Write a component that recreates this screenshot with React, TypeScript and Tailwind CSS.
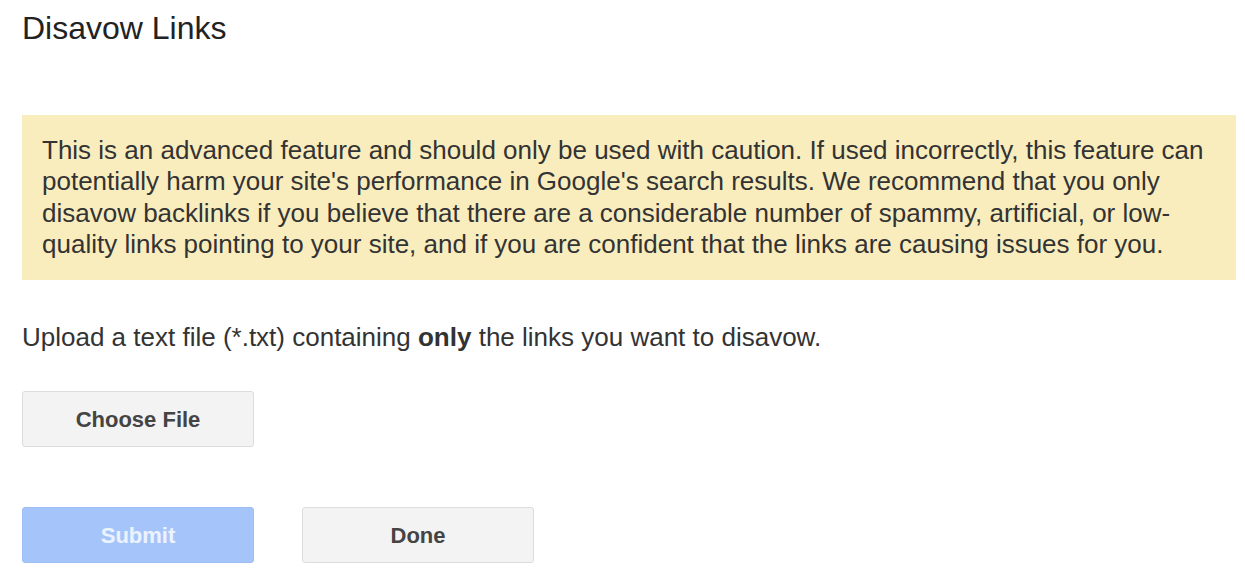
export default function App() {
  return (
    <div className="min-h-screen bg-white pl-[22px] pr-[9px] pt-3 font-['Liberation_Sans',Arial,sans-serif]">
      <h1 className="text-[32px] leading-8 text-[#222]">Disavow Links</h1>

      <div className="mt-[71px] bg-[#f9edbe] px-5 py-[20px] text-[26px] leading-[31.3px] text-[#333]">
        This is an advanced feature and should only be used with caution. If used incorrectly, this feature can
        potentially harm your site's performance in Google's search results. We recommend that you only disavow
        backlinks if you believe that there are a considerable number of spammy, artificial, or low-quality links
        pointing to your site, and if you are confident that the links are causing issues for you.
      </div>

      <p className="mt-[42px] text-[26px] leading-[31px] text-[#333]">
        Upload a text file (*.txt) containing <b>only</b> the links you want to disavow.
      </p>

      <button className="mt-[38px] flex h-[56px] w-[232px] items-center justify-center rounded-[3px] border border-[#dcdcdc] bg-[#f3f3f3] text-[22px] font-bold text-[#444]">
        Choose File
      </button>

      <div className="mt-[60px] flex gap-12">
        <button className="flex h-[56px] w-[232px] items-center justify-center rounded-[3px] border border-[#9dbff5] bg-[#a5c5fa] text-[22px] font-bold text-white/80">
          Submit
        </button>
        <button className="flex h-[56px] w-[232px] items-center justify-center rounded-[3px] border border-[#dcdcdc] bg-[#f3f3f3] text-[22px] font-bold text-[#444]">
          Done
        </button>
      </div>
    </div>
  );
}
